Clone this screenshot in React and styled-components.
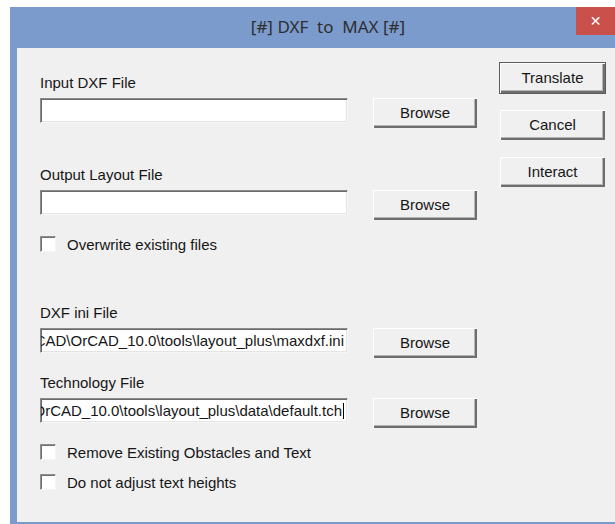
import React from "react"
import styled, { createGlobalStyle } from 'styled-components'

const GlobalStyle = createGlobalStyle`
  html, body {
    margin: 0;
    padding: 0;
    background: #fff;
    overflow: hidden;
  }
`

const uiFont = `"Liberation Sans", Arial, sans-serif`

const Window = styled.div`
  margin: 7px 0 0 10px;
  width: 605px;
  height: 517px;
  background: #7b9bcd;
  padding: 0 0 2px 7px;
  box-sizing: border-box;
  display: flex;
  flex-direction: column;
`

const TitleBar = styled.div`
  height: 41px;
  display: flex;
  align-items: flex-start;
  flex-shrink: 0;
`

const Title = styled.div`
  flex: 1;
  padding-left: 63px;
  height: 40px;
  line-height: 40px;
  text-align: center;
  font-family: "Noto Sans", "Open Sans", sans-serif;
  font-size: 17px;
  color: #2e2e2e;
  white-space: pre;
`

const CloseButton = styled.div`
  width: 39px;
  height: 28px;
  background: #c9504b;
  color: #fff;
  display: flex;
  align-items: center;
  justify-content: center;
  font-family: "DejaVu Sans", sans-serif;
  font-size: 14px;
  font-weight: bold;
`

const Body = styled.div`
  flex: 1;
  background: #f0f0f0;
  display: flex;
  padding: 14px 0 0 23px;
  font-family: ${uiFont};
  font-size: 15px;
  color: #161616;
`

const Main = styled.div`
  width: 438px;
  display: flex;
  flex-direction: column;
`

const Side = styled.div`
  margin-left: 21px;
  display: flex;
  flex-direction: column;
  gap: 15px;
`

const Label = styled.div`
  height: 18px;
  line-height: 18px;
  margin-top: ${p => p.$top}px;
`

const FieldRow = styled.div`
  display: flex;
  align-items: flex-start;
  margin-top: 5px;
  gap: 24px;
`

const TextBox = styled.div`
  width: 308px;
  height: 25px;
  margin-top: 1px;
  box-sizing: border-box;
  background: #fff;
  border-style: solid;
  border-width: 1px;
  border-color: #8a8a8a #f6f6f6 #f6f6f6 #8a8a8a;
  box-shadow: inset 1px 1px 0 #6a6a6a, inset -1px -1px 0 #e4e4e4;
  display: flex;
  justify-content: flex-end;
  align-items: center;
  overflow: hidden;
  padding: 0 3px 0 2px;
`

const TextValue = styled.span`
  white-space: nowrap;
  line-height: 18px;
`

const Caret = styled.span`
  display: inline-block;
  width: 1px;
  height: 16px;
  margin-left: 1px;
  background: #000;
  vertical-align: -3px;
`

const Button = styled.div`
  width: ${p => p.$w || 106}px;
  height: 32px;
  box-sizing: border-box;
  display: flex;
  align-items: center;
  justify-content: center;
  background: #f0f0f0;
  border: 1px solid ${p => p.$default ? '#5c5c5c' : 'transparent'};
  box-shadow: inset 1px 1px 0 #fff, inset -2px -2px 0 #6e6e6e, inset -3px -3px 0 #b4b4b4;
  flex-shrink: 0;
  padding-bottom: 2px;
`

const CheckRow = styled.label`
  display: flex;
  align-items: center;
  height: 18px;
  margin-top: ${p => p.$top}px;
  gap: 11px;
`

const Box = styled.span`
  width: 16px;
  height: 16px;
  box-sizing: border-box;
  background: #fff;
  border-style: solid;
  border-width: 1px;
  border-color: #909090 #f4f4f4 #f4f4f4 #909090;
  box-shadow: inset 1px 1px 0 #707070;
  flex-shrink: 0;
`

const Field = ({ label, top, value, caret }) => (
  <>
    <Label $top={top}>{label}</Label>
    <FieldRow>
      <TextBox>
        <TextValue>{value}{caret && <Caret />}</TextValue>
      </TextBox>
      <Button>Browse</Button>
    </FieldRow>
  </>
)

const Check = ({ top, children }) => (
  <CheckRow $top={top}>
    <Box />
    <span>{children}</span>
  </CheckRow>
)

export default function App() {
  return <>
    <GlobalStyle />
    <Window>
      <TitleBar>
        <Title>{'[#] DXF  to  MAX [#]'}</Title>
        <CloseButton>✕</CloseButton>
      </TitleBar>
      <Body>
        <Main>
          <Label $top={12}>Input DXF File</Label>
          <FieldRow>
            <TextBox />
            <Button>Browse</Button>
          </FieldRow>
          <Label $top={37}>Output Layout File</Label>
          <FieldRow>
            <TextBox />
            <Button>Browse</Button>
          </FieldRow>
          <Check top={14}>Overwrite existing files</Check>
          <Field
            label="DXF ini File"
            top={51}
            value={'\\OrCAD\\OrCAD_10.0\\tools\\layout_plus\\maxdxf.ini'}
          />
          <Field
            label="Technology File"
            top={15}
            value={'OrCAD_10.0\\tools\\layout_plus\\data\\default.tch'}
            caret
          />
          <Check top={14}>Remove Existing Obstacles and Text</Check>
          <Check top={12}>Do not adjust text heights</Check>
        </Main>
        <Side>
          <Button $w={107} $default>Translate</Button>
          <Button $w={107}>Cancel</Button>
          <Button $w={107}>Interact</Button>
        </Side>
      </Body>
    </Window>
  </>
}
